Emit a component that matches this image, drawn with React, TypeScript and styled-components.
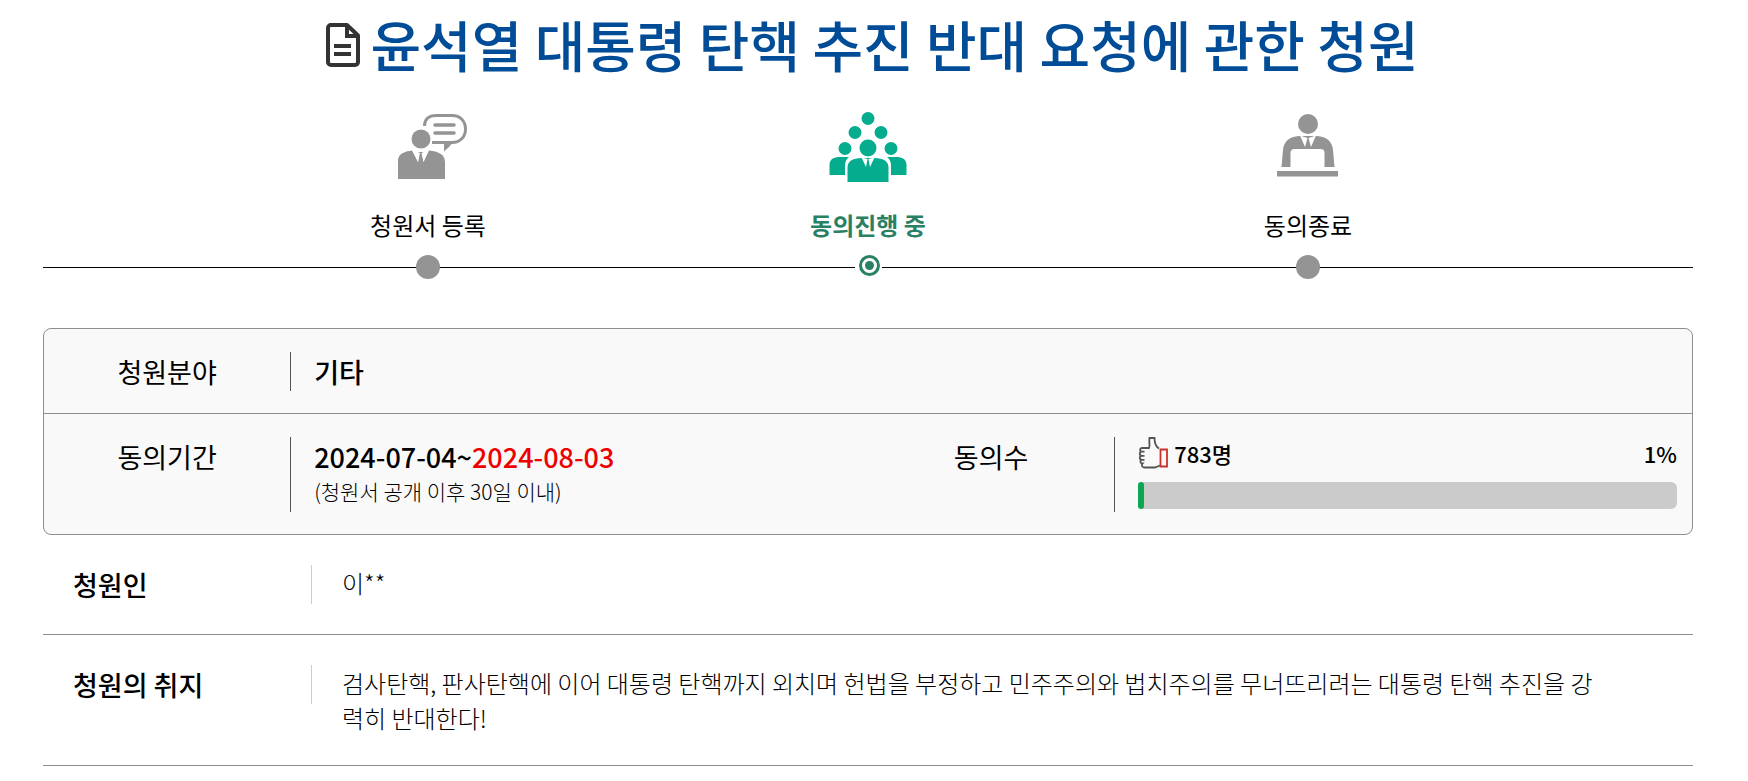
import React from "react";
import styled, { createGlobalStyle } from "styled-components";

const GlobalStyle = createGlobalStyle`
  *, *::before, *::after { box-sizing: border-box; }
  body {
    margin: 0;
    background: #fff;
    color: #000;
    font-family: "Noto Sans CJK KR", "Noto Sans", sans-serif;
  }
  h1, ol, dl, dd, dt, p { margin: 0; padding: 0; }
`;

const Page = styled.main`
  padding: 9px 55px 15px 43px;
`;

const Title = styled.h1`
  display: flex;
  align-items: center;
  justify-content: center;
  gap: 9px;
  padding-left: 8px;
  color: #004c97;
  font-size: 55px;
  font-weight: 500;
  line-height: 68px;

  svg {
    flex: none;
    margin-top: 4px;
  }
`;

const Steps = styled.ol`
  display: flex;
  margin-top: 33px;
  padding: 0 10%;
  list-style: none;
  background: linear-gradient(#000, #000) 0 157px / 100% 1px no-repeat;
`;

const Step = styled.li<{ $active?: boolean }>`
  flex: 1;
  display: flex;
  flex-direction: column;
  align-items: center;
  color: ${(p) => (p.$active ? "#2a8062" : "#000")};
  font-size: 24px;
  font-weight: ${(p) => (p.$active ? 700 : 400)};
  line-height: 36px;
`;

const StepIcon = styled.span`
  display: flex;
  height: 97px;
`;

const Dot = styled.span`
  width: 24px;
  height: 24px;
  margin-top: 12px;
  border-radius: 50%;
  background: #949494;
`;

const ActiveDot = styled.span`
  display: flex;
  justify-content: center;
  width: 27px;
  height: 24px;
  margin-top: 12px;
  padding-left: 2px;
  background: #fff;
`;

const Summary = styled.dl`
  margin-top: 49px;
  border: 1px solid #8e8e8e;
  border-radius: 8px;
  background: #f9f9f9;
`;

const SummaryRow = styled.div`
  display: flex;
  padding: 23px 0 22px;

  & + & {
    border-top: 1px solid #8e8e8e;
  }
`;

const SummaryItem = styled.div<{ $half?: boolean }>`
  display: flex;
  flex: 0 0 ${(p) => (p.$half ? "50%" : "100%")};
`;

const SummaryLabel = styled.dt<{ $half?: boolean }>`
  flex: 0 0 ${(p) => (p.$half ? "30%" : "15%")};
  border-right: 1px solid #555;
  font-size: 27px;
  line-height: 39px;
  text-align: center;
`;

const SummaryValue = styled.dd`
  flex: 1;
  padding: 0 15px 0 23px;
  font-size: 27px;
  font-weight: 500;
  line-height: 39px;
`;

const Deadline = styled.span`
  color: #ee0000;
`;

const Note = styled.p`
  padding-bottom: 6px;
  font-size: 21px;
  font-weight: 300;
  line-height: 30px;
`;

const Tally = styled.div`
  display: flex;
  align-items: center;
  height: 32px;
  font-size: 22px;
`;

const Count = styled.span`
  flex: 1;
  margin-left: 5px;
`;

const Track = styled.div`
  height: 27px;
  margin-top: 13px;
  border-radius: 6px;
  background: #cbcbcb;
`;

const Fill = styled.div`
  height: 100%;
  border-radius: 3px;
  background: #0ca750;
`;

const DetailRow = styled.div`
  display: flex;
  align-items: flex-start;
  padding: 30px 0;
  border-bottom: 1px solid #8e8e8e;
`;

const DetailLabel = styled.dt`
  flex: 0 0 269px;
  padding-left: 30px;
  border-right: 1px solid #ccc;
  font-size: 27px;
  font-weight: 500;
  line-height: 39px;
`;

const DetailValue = styled.dd`
  flex: 1;
  padding: 0 90px 0 30px;
  font-size: 24px;
  font-weight: 300;
  line-height: 35px;
`;

const DocumentIcon = () => (
  <svg width="36" height="46" viewBox="0 0 36 46" fill="none" stroke="#333" strokeWidth="4" aria-hidden="true">
    <path d="M5 3H22L33 13.500V40a3 3 0 0 1-3 3H6a3 3 0 0 1-3-3V6a3 3 0 0 1 3-3Z" strokeLinejoin="round" />
    <path d="M22 3V14H33M9 24H26M9 32H26" />
  </svg>
);

const SpeakerIcon = () => (
  <svg width="64" height="70" viewBox="0 0 64 70" fill="#949494" overflow="visible" aria-hidden="true">
    <path
      d="M28.500 16C28.500 9 33 5.500 40 5.500H56C64 5.500 69.500 11 69.500 19S64 32.500 56 32.500H36"
      fill="none"
      stroke="#949494"
      strokeWidth="3"
    />
    <path d="M48 32H57Q53 38 48 41.500Z" />
    <path d="M39 15H58M39 23H58" stroke="#949494" strokeWidth="3.500" strokeLinecap="round" />
    <circle cx="25" cy="29" r="9.500" />
    <path d="M2 69V51C2 44 8 41.500 16 40.500L22 52L23 45L22 42H27L26.500 45L27.500 52L33 40.500C42 41.500 49 44 49 52V69Z" />
    <path d="M17.500 40.500L22 52L24 43ZM32 40.500L27.500 52L25.500 43Z" fill="#fff" />
  </svg>
);

const CrowdIcon = () => (
  <svg width="80" height="74" viewBox="0 0 80 74" fill="#05ac8e" aria-hidden="true">
    <circle cx="40" cy="8.500" r="6.500" />
    <circle cx="27" cy="22.500" r="6.500" />
    <circle cx="53" cy="22.500" r="6.500" />
    <circle cx="17" cy="38.500" r="6.500" />
    <circle cx="63" cy="38.500" r="6.500" />
    <circle cx="40" cy="38" r="8.500" />
    <path d="M1.500 65V55C1.500 49 6 47 12 47H21Q17 50 17 56V65Z" />
    <path d="M78.500 65V55C78.500 49 74 47 68 47H59Q63 50 63 56V65Z" />
    <path d="M19.500 72V58C19.500 51 24 48.500 34 48H46C56 48.500 60.500 51 60.500 58V72Z" />
    <path d="M33.500 47.500L38 57L39.500 49ZM46.500 47.500L42 57L40.500 49Z" fill="#fff" />
  </svg>
);

const DeskIcon = () => (
  <svg width="64" height="70" viewBox="0 0 64 70" fill="#949494" aria-hidden="true">
    <circle cx="32" cy="14" r="10" />
    <path d="M5.500 57L7 40C8 31 13 27 23 26H41C51 27 56 31 57 40L58.500 57H48.500V43Q48.500 39 44.500 39H18.500Q14.500 39 14.500 43V57Z" />
    <path d="M24 25.500L29 37L31.500 28ZM40 25.500L35 37L32.500 28Z" fill="#fff" />
    <path d="M1 61H62V66.500H1Z" />
  </svg>
);

const TargetIcon = () => (
  <svg width="21" height="21" viewBox="0 0 21 21" aria-hidden="true">
    <circle cx="10.500" cy="10.500" r="9" fill="#fff" stroke="#2a8062" strokeWidth="3" />
    <circle cx="10.500" cy="10.500" r="4.500" fill="#2a8062" />
  </svg>
);

const ThumbIcon = () => (
  <svg width="31" height="32" viewBox="0 0 31 32" fill="none" stroke="#555" strokeWidth="1.800" aria-hidden="true">
    <path d="M21 11.500C17.500 9.500 16.500 7 16.500 1H11.500C10.500 5 12.500 8 11 11H4C1.500 11 1.500 14.500 4 14.700H6.500M4 14.700C1 15 1 18.500 4 18.800H6.500M4 18.800C1 19 1 22.500 4 22.800H6.500M4 22.800C1.500 23 2 26.500 4.500 26.500C3 28 4 30.500 7 30.500H17L22 28.500" />
    <path d="M22.500 12.500H29V29.500H22.500Z" stroke="#c8322b" />
  </svg>
);

const PERCENT = 1;

export default function App() {
  return (
    <>
      <GlobalStyle />
      <Page>
        <Title>
          <DocumentIcon />
          윤석열 대통령 탄핵 추진 반대 요청에 관한 청원
        </Title>

        <Steps>
          <Step>
            <StepIcon><SpeakerIcon /></StepIcon>
            청원서 등록
            <Dot />
          </Step>
          <Step $active aria-current="step">
            <StepIcon><CrowdIcon /></StepIcon>
            동의진행 중
            <ActiveDot><TargetIcon /></ActiveDot>
          </Step>
          <Step>
            <StepIcon><DeskIcon /></StepIcon>
            동의종료
            <Dot />
          </Step>
        </Steps>

        <Summary>
          <SummaryRow>
            <SummaryItem>
              <SummaryLabel>청원분야</SummaryLabel>
              <SummaryValue>기타</SummaryValue>
            </SummaryItem>
          </SummaryRow>
          <SummaryRow>
            <SummaryItem $half>
              <SummaryLabel $half>동의기간</SummaryLabel>
              <SummaryValue>
                2024-07-04~<Deadline>2024-08-03</Deadline>
                <Note>(청원서 공개 이후 30일 이내)</Note>
              </SummaryValue>
            </SummaryItem>
            <SummaryItem $half>
              <SummaryLabel $half>동의수</SummaryLabel>
              <SummaryValue>
                <Tally>
                  <ThumbIcon />
                  <Count>783명</Count>
                  <span>{PERCENT}%</span>
                </Tally>
                <Track role="progressbar" aria-label="동의수" aria-valuenow={PERCENT} aria-valuemin={0} aria-valuemax={100}>
                  <Fill style={{ width: `${PERCENT}%` }} />
                </Track>
              </SummaryValue>
            </SummaryItem>
          </SummaryRow>
        </Summary>

        <dl>
          <DetailRow>
            <DetailLabel>청원인</DetailLabel>
            <DetailValue>이**</DetailValue>
          </DetailRow>
          <DetailRow>
            <DetailLabel>청원의 취지</DetailLabel>
            <DetailValue>
              검사탄핵, 판사탄핵에 이어 대통령 탄핵까지 외치며 헌법을 부정하고 민주주의와 법치주의를 무너뜨리려는 대통령 탄핵 추진을 강력히 반대한다!
            </DetailValue>
          </DetailRow>
        </dl>
      </Page>
    </>
  );
}
